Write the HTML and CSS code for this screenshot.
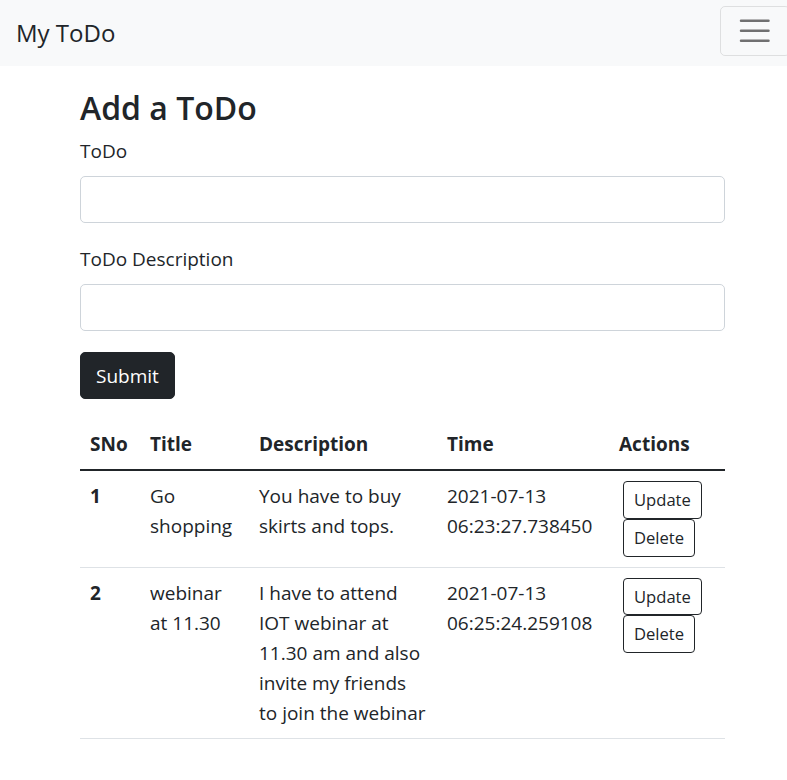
FILE: index.html
```html
<!DOCTYPE html>
<html lang="en">
<head>
<meta charset="utf-8">
<title>My ToDo</title>
<link rel="stylesheet" href="styles.css">
</head>
<body>
<nav class="navbar">
  <span class="brand">My ToDo</span>
  <button class="toggler" type="button" aria-label="Toggle navigation">
    <svg class="toggler-icon" viewBox="0 0 30 30" width="37.5" height="37.5">
      <path d="M4 7h22M4 15h22M4 23h22" stroke="rgba(0,0,0,0.55)" stroke-width="2" stroke-linecap="round" fill="none"/>
    </svg>
  </button>
</nav>
<main class="container">
  <h2 class="title">Add a ToDo</h2>
  <form class="todo-form">
    <div class="field">
      <label class="label" for="title">ToDo</label>
      <input class="input" id="title" type="text">
    </div>
    <div class="field">
      <label class="label" for="desc">ToDo Description</label>
      <input class="input" id="desc" type="text">
    </div>
    <button class="btn-dark" type="button">Submit</button>
  </form>
  <table class="table">
    <colgroup>
      <col class="c-sno"><col class="c-title"><col class="c-desc"><col class="c-time"><col class="c-act">
    </colgroup>
    <thead>
      <tr><th>SNo</th><th>Title</th><th>Description</th><th>Time</th><th>Actions</th></tr>
    </thead>
    <tbody>
      <tr>
        <th class="row-no">1</th>
        <td>Go shopping</td>
        <td>You have to buy skirts and tops.</td>
        <td>2021-07-13 06:23:27.738450</td>
        <td><div class="actions"><button class="btn-sm" type="button">Update</button><button class="btn-sm" type="button">Delete</button></div></td>
      </tr>
      <tr>
        <th class="row-no">2</th>
        <td>webinar at 11.30</td>
        <td>I have to attend IOT webinar at 11.30 am and also invite my friends to join the webinar</td>
        <td>2021-07-13 06:25:24.259108</td>
        <td><div class="actions"><button class="btn-sm" type="button">Update</button><button class="btn-sm" type="button">Delete</button></div></td>
      </tr>
    </tbody>
  </table>
</main>
</body>
</html>
```
FILE: styles.css
```css
html { overflow-x: hidden; }
* { box-sizing: border-box; }
body {
  margin: 0;
  font-family: "Open Sans", "Noto Sans", sans-serif;
  font-size: 19px;
  line-height: 30px;
  color: #212529;
  background: #fff;
}
.navbar {
  height: 66px;
  background: #f8f9fa;
  display: flex;
  align-items: center;
  justify-content: space-between;
  padding: 0 0 0 16px;
}
.brand {
  font-size: 24px;
  line-height: 38px;
  color: #212529;
}
.toggler {
  width: 69.5px;
  height: 50px;
  margin-right: -2.5px;
  margin-top: -4px;
  padding: 5px 15px;
  background: transparent;
  border: 1px solid rgba(0,0,0,0.1);
  border-radius: 5px;
  display: flex;
  align-items: center;
}
.toggler-icon { display: block; }
.container {
  width: 645px;
  margin-left: 80px;
  padding-top: 22px;
}
.title {
  margin: 0 0 8px;
  font-size: 32px;
  line-height: 40px;
  font-weight: 600;
}
.todo-form { display: flex; flex-direction: column; align-items: flex-start; }
.field { width: 100%; margin-bottom: 21px; }
.label { display: block; margin-bottom: 10px; }
.input {
  display: block;
  width: 100%;
  height: 47px;
  border: 1px solid #ced4da;
  border-radius: 5px;
  background: #fff;
  font: inherit;
}
.btn-dark {
  font: inherit;
  background: #212529;
  color: #fff;
  border: 1px solid #212529;
  border-radius: 5px;
  padding: 7.5px 15px;
  line-height: 30px;
}
.table {
  width: 645px;
  margin-top: 20px;
  border-collapse: collapse;
  table-layout: fixed;
}
.c-sno { width: 60px; }
.c-title { width: 109px; }
.c-desc { width: 188px; }
.c-time { width: 172px; }
.c-act { width: 116px; }
.table th, .table td {
  padding: 10px;
  text-align: left;
  vertical-align: top;
  border-bottom: 1px solid #dee2e6;
}
.table thead th {
  font-weight: 700;
  border-bottom: 2px solid #212529;
}
.row-no { font-weight: 700; }
.actions {
  display: flex;
  flex-direction: column;
  align-items: flex-start;
  padding-left: 4px;
}
.btn-sm {
  font-family: inherit;
  font-size: 16.6px;
  line-height: 25.75px;
  padding: 5px 10px;
  background: #fff;
  color: #212529;
  border: 1px solid #212529;
  border-radius: 4px;
}
```
